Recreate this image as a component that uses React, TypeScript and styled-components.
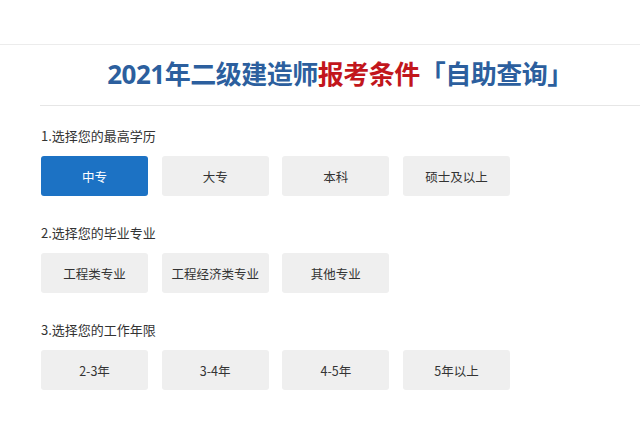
import React, { useState } from "react";
import styled, { createGlobalStyle } from "styled-components";

const GlobalStyle = createGlobalStyle`
  html, body {
    margin: 0;
    padding: 0;
    background: #ffffff;
  }
  body {
    font-family: "Noto Sans", "Noto Sans CJK SC", sans-serif;
    color: #333333;
  }
`;

const Page = styled.div`
  width: 640px;
  padding-top: 44px;
`;

const TopRule = styled.div`
  height: 1px;
  background: #ececec;
`;

const Main = styled.div`
  margin-left: 40px;
`;

const TitleBar = styled.div`
  height: 60px;
  display: flex;
  align-items: center;
  justify-content: center;
  border-bottom: 1px solid #e6e6e6;
`;

const Title = styled.h1`
  margin: 0;
  font-family: "Noto Sans", "Noto Sans CJK SC", sans-serif;
  font-size: 26px;
  font-weight: 700;
  letter-spacing: -0.5px;
  color: #2c5f9e;
  white-space: nowrap;
  transform: translateY(-2px);
`;

const Accent = styled.span`
  color: #c2161c;
`;

const Form = styled.div`
  padding: 20px 0 0 1px;
  display: flex;
  flex-direction: column;
  gap: 27px;
`;

const Section = styled.div`
  display: flex;
  flex-direction: column;
  gap: 10px;
`;

const Label = styled.div`
  font-family: "Noto Sans CJK SC", sans-serif;
  font-size: 13px;
  line-height: 20px;
  color: #333333;
`;

const Options = styled.div`
  display: flex;
  gap: 13.7px;
`;

const Option = styled.button<{ $active?: boolean }>`
  width: 107px;
  height: 40px;
  border: none;
  border-radius: 3px;
  padding: 0;
  font-family: "Noto Sans CJK SC", sans-serif;
  font-size: 12.5px;
  cursor: pointer;
  background: ${(p) => (p.$active ? "#1c72c4" : "#efefef")};
  color: ${(p) => (p.$active ? "#ffffff" : "#333333")};
`;

type Group = { label: string; options: string[] };

const groups: Group[] = [
  { label: "1.选择您的最高学历", options: ["中专", "大专", "本科", "硕士及以上"] },
  { label: "2.选择您的毕业专业", options: ["工程类专业", "工程经济类专业", "其他专业"] },
  { label: "3.选择您的工作年限", options: ["2-3年", "3-4年", "4-5年", "5年以上"] },
];

const App = () => {
  const [picked, setPicked] = useState<Record<number, string>>({ 0: "中专" });

  return (
    <Page>
      <GlobalStyle />
      <TopRule />
      <Main>
        <TitleBar>
          <Title>
            2021年二级建造师<Accent>报考条件</Accent>「自助查询」
          </Title>
        </TitleBar>
        <Form>
          {groups.map((g, i) => (
            <Section key={g.label}>
              <Label>{g.label}</Label>
              <Options>
                {g.options.map((o) => (
                  <Option
                    key={o}
                    $active={picked[i] === o}
                    onClick={() => setPicked({ ...picked, [i]: o })}
                  >
                    {o}
                  </Option>
                ))}
              </Options>
            </Section>
          ))}
        </Form>
      </Main>
    </Page>
  );
};

export default App;
